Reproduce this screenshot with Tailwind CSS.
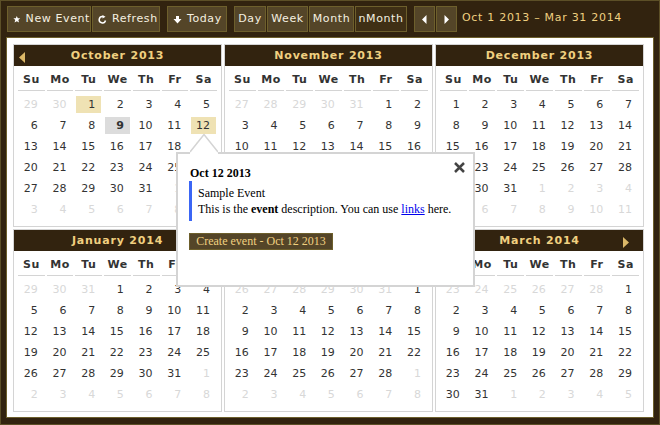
<!DOCTYPE html>
<html lang="en">
<head>
  <meta charset="UTF-8" />
  <title>Calendar</title>
  <script src="https://cdn.jsdelivr.net/npm/@tailwindcss/browser@4"></script>
</head>
<body class="bg-[#32230f] font-['DejaVu_Sans',sans-serif] text-[11px] overflow-hidden">
  <div class="relative w-[660px] h-[425px] border border-[#5c4f27] p-[5px]">
    <!-- toolbar -->
    <div class="flex items-start h-[31px] text-[11px] text-[#f4f0e0] tracking-[0.6px] whitespace-nowrap">
      <div class="ml-[1px] flex gap-[1px]">
        <button class="h-[26px] w-[84px] bg-[#544528] border border-[#6d5f2c] flex items-center gap-[5px] pl-[5px]">
          <svg width="9" height="9" viewBox="0 0 10 10"><path d="M5 .5l1.300 3h3.200L7 5.600 8 9 5 7.200 2 9l1-3.400L.5 3.500h3.200z" fill="#fff"/></svg>New Event</button>
        <button class="h-[26px] w-[68px] bg-[#544528] border border-[#6d5f2c] flex items-center gap-[5px] pl-[5px]">
          <svg width="9" height="9" viewBox="0 0 9 9"><path d="M7.500 5.500A3.200 3.200 0 1 1 5 1.500" fill="none" stroke="#fff" stroke-width="1.500"/><path d="M4.500 0l3 1.800-3 1.800z" fill="#fff"/></svg>Refresh</button>
      </div>
      <button class="ml-[7px] h-[26px] w-[60px] bg-[#544528] border border-[#6d5f2c] flex items-center gap-[5px] pl-[5px]">
        <svg width="9" height="9" viewBox="0 0 9 9"><path d="M3 1h3v3h2.500L4.500 8.500.5 4H3z" fill="#fff"/></svg>Today</button>
      <div class="ml-[7px] flex gap-[1px]">
        <button class="h-[26px] w-[32px] bg-[#544528] border border-[#6d5f2c]">Day</button>
        <button class="h-[26px] w-[41px] bg-[#544528] border border-[#6d5f2c]">Week</button>
        <button class="h-[26px] w-[45px] bg-[#544528] border border-[#6d5f2c]">Month</button>
        <button class="h-[26px] w-[52px] bg-[#3f2f15] border border-[#6d5f2c]">nMonth</button>
      </div>
      <div class="ml-[7px] flex gap-[1px]">
        <button class="h-[26px] w-[21px] bg-[#544528] border border-[#6d5f2c] flex items-center justify-center"><svg width="5" height="9" viewBox="0 0 5 9"><path d="M4.500 0v9L0 4.500z" fill="#fff"/></svg></button>
        <button class="h-[26px] w-[21px] bg-[#544528] border border-[#6d5f2c] flex items-center justify-center"><svg width="5" height="9" viewBox="0 0 5 9"><path d="M.5 0v9L5 4.500z" fill="#fff"/></svg></button>
      </div>
      <div class="ml-[5px] h-[24px] leading-[24px] text-[#f0d080] tracking-[0.7px]">Oct 1 2013 – Mar 31 2014</div>
    </div>
    <!-- calendar panel -->
    <div id="panel" class="w-[648px] h-[381px] bg-white border border-[#6d5f2c] pl-[6px] pt-[6px] grid grid-cols-[209px_209px_209px] grid-rows-[183px_183px] gap-[2px]"></div>

    <!-- event popup -->
    <div class="absolute left-[175px] top-[151px] w-[299px] h-[135px] bg-white border-[2px] border-[#d4d4d4] font-['Liberation_Serif',serif] text-[12px] text-black leading-[16px]">
      <svg class="absolute left-[12px] top-[-20px]" width="28" height="20" viewBox="0 0 28 20"><path d="M0 18L14 .5 28 18v2H0z" fill="white"/><path d="M0 18L14 .5 28 18" fill="none" stroke="#d4d4d4" stroke-width="1.500"/></svg>
      <svg class="absolute right-[7px] top-[7px]" width="13" height="13" viewBox="0 0 13 13"><path d="M2 2l9 9M11 2l-9 9" stroke="#444" stroke-width="2.500"/></svg>
      <div class="pl-[12px] pt-[11px] font-bold">Oct 12 2013</div>
      <div class="ml-[11px] border-l-[3px] border-[#3b66f5] pl-[6px] pt-[4px] h-[40px]">
        <div>Sample Event</div>
        <div>This is the <b>event</b> description. You can use <a href="#" class="text-[#0000ee] underline">links</a> here.</div>
      </div>
      <button class="block ml-[11px] mt-[12px] h-[17px] w-[144px] bg-[#544528] border border-[#6d5f2c] text-[#f0d080] text-[12px] leading-[15px] text-center">Create event - Oct 12 2013</button>
    </div>
  </div>

<script>
const months = [
  { name: "October 2013", start: 2, days: 31, prevDays: 30, prev: true },
  { name: "November 2013", start: 5, days: 30, prevDays: 31 },
  { name: "December 2013", start: 0, days: 31, prevDays: 30 },
  { name: "January 2014", start: 3, days: 31, prevDays: 31 },
  { name: "February 2014", start: 6, days: 28, prevDays: 31 },
  { name: "March 2014", start: 6, days: 31, prevDays: 28, next: true }
];
const dayNames = ["Su", "Mo", "Tu", "We", "Th", "Fr", "Sa"];

function renderMonth(m, idx) {
  let head = "";
  dayNames.forEach(d => {
    head += `<div class="h-[23px] leading-[24px] border-b-[1px] border-[#d4d4d4] text-center font-bold text-[#333] tracking-[0.5px]">${d}</div>`;
  });
  let cells = "";
  for (let i = 0; i < 42; i++) {
    let n = i - m.start + 1;
    let muted = false;
    if (n < 1) { n = m.prevDays + n; muted = true; }
    else if (n > m.days) { n = n - m.days; muted = true; }
    let cls = muted ? "text-[#d8d8d8]" : "text-[#333]";
    if (idx === 0 && !muted && (n === 1 || n === 12)) cls += " bg-[#efe2b4]";
    if (idx === 0 && !muted && n === 9) cls += " bg-[#dcdcdc] font-bold";
    cells += `<div class="h-[17px] leading-[17px] m-[2px_1px] text-right pr-[6px] ${cls}">${n}</div>`;
  }
  return `<div class="relative border border-[#d4d4d4]">
    <div class="h-[21px] leading-[21px] bg-[#32230f] text-center text-[#f0d080] font-bold tracking-[0.8px]">${m.name}</div>
    ${m.prev ? '<svg class="absolute left-[5px] top-[7px]" width="6" height="11" viewBox="0 0 6 11"><path d="M6 0v11L0 5.500z" fill="#dcb868"/></svg>' : ''}
    ${m.next ? '<svg class="absolute right-[14px] top-[7px]" width="6" height="11" viewBox="0 0 6 11"><path d="M0 0v11L6 5.500z" fill="#dcb868"/></svg>' : ''}
    <div class="px-[4px] pt-[2px] grid grid-cols-7 gap-x-[2px]">${head}</div>
    <div class="px-[4px] pt-[3px] grid grid-cols-7 gap-x-[2px]">${cells}</div>
  </div>`;
}

document.getElementById("panel").innerHTML = months.map(renderMonth).join("");
</script>
</body>
</html>
